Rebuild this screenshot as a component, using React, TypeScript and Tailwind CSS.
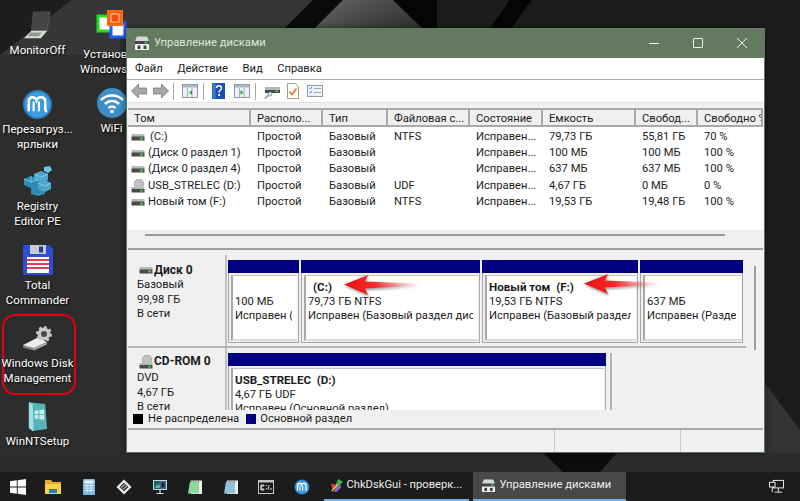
import type { ReactNode } from "react";

// Small hard drive glyph used in the list, disk labels
function DriveIcon({ className = "" }: { className?: string }) {
  return (
    <svg viewBox="0 0 14 8" className={className}>
      <rect x="0.5" y="1" width="13" height="3" rx="1" fill="#b8b8b8" />
      <rect x="0.5" y="3.5" width="13" height="4" fill="#4a4a4a" />
      <rect x="9" y="4.5" width="3" height="2" fill="#46c85a" />
    </svg>
  );
}

function CdIcon({ className = "" }: { className?: string }) {
  return (
    <svg viewBox="0 0 14 14" className={className}>
      <circle cx="8" cy="5" r="4.8" fill="#c4c4c4" stroke="#888" strokeWidth="0.6" />
      <circle cx="8" cy="5" r="1.4" fill="#f4f4f4" stroke="#777" strokeWidth="0.5" />
      <rect x="0.5" y="8" width="13" height="2" fill="#b8b8b8" />
      <rect x="0.5" y="10" width="13" height="3.5" fill="#4a4a4a" />
      <rect x="9" y="11" width="3" height="1.5" fill="#46c85a" />
    </svg>
  );
}

function ManagerIcon({ className = "" }: { className?: string }) {
  return (
    <svg viewBox="0 0 16 16" className={className}>
      <path d="M3 1.5h10l2 4.5H1z" fill="#d8d8d8" />
      <rect x="1" y="6" width="14" height="3" fill="#444" />
      <rect x="10.5" y="6.8" width="3" height="1.4" fill="#4bd463" />
      <rect x="1" y="9" width="14" height="6" rx="1" fill="#f2f2f2" />
      <rect x="3.5" y="10.5" width="3" height="3.5" fill="#444" />
      <rect x="9.5" y="10.5" width="3" height="3.5" fill="#444" />
    </svg>
  );
}

function MoboIcon({ className = "" }: { className?: string }) {
  return (
    <svg viewBox="0 0 32 32" className={className}>
      <circle cx="16" cy="16" r="15" fill="#2a7fc4" />
      <circle cx="16" cy="16" r="13" fill="#3f9bdc" />
      <path
        d="M7 23V13c0-3 1.5-4.500 4-4.500s3.500 1.500 4 3c.5-1.500 2-3 4.500-3S24 10 24 13v7c0 2 1 3 2 3"
        fill="none"
        stroke="#fff"
        strokeWidth="2.6"
      />
      <path d="M12 23V13M17.500 23V13" fill="none" stroke="#fff" strokeWidth="2.2" />
    </svg>
  );
}

function NoteIcon({ tone }: { tone: "green" | "blue" }) {
  const fill = tone === "green" ? "#8fd9a0" : "#8fc3d9";
  return (
    <svg viewBox="0 0 16 16" className="h-[16px] w-[16px]">
      <rect x="4" y="1.500" width="11" height="13.500" fill="#f1efe2" />
      <path d="M3 2.500h9v12H1z" fill={fill} />
      <path d="M4 1.500v2M6.500 1.500v2M9 1.500v2M11.500 1.500v2" stroke="#667" strokeWidth="0.7" />
    </svg>
  );
}

const taskbarIcons: ReactNode[] = [
  <svg key="win" viewBox="0 0 16 16" className="h-[16px] w-[16px]">
    <path d="M0 2.300l6.800-1v6.300H0zM7.700 1.200L16 0v7.600H7.700zM0 8.400h6.800v6.300L0 13.700zM7.700 8.400H16V16l-8.300-1.200z" fill="#fff" />
  </svg>,
  <svg key="folder" viewBox="0 0 16 16" className="h-[16px] w-[16px]">
    <path d="M0 1h6l1.500 2H16v12H0z" fill="#e9a92c" />
    <path d="M0 5h16v10H0z" fill="#fbd14b" />
    <rect x="4" y="10" width="8" height="4" fill="#1f7ccf" />
  </svg>,
  <svg key="calc" viewBox="0 0 12 16" className="h-[16px] w-[12px]">
    <rect width="12" height="16" rx="1" fill="#7fb9e0" />
    <rect x="1.500" y="1.500" width="9" height="3" fill="#e8f3fa" />
    <path d="M1.500 6.500h9M1.500 9h9M1.500 11.500h9M4 5.500v8M8 5.500v8" stroke="#dcecf6" strokeWidth="1" />
  </svg>,
  <svg key="chip" viewBox="0 0 16 16" className="h-[16px] w-[16px]">
    <path d="M8 0.500l7.500 7.500L8 15.500.5 8z" fill="#ececec" />
    <path d="M8 3.500L12.500 8 8 12.500 3.500 8z" fill="#3a3a3a" />
    <path d="M5 8.500l5-4M6.500 10.500l5-4" stroke="#e4e4e4" strokeWidth="0.9" />
  </svg>,
  <svg key="monitor" viewBox="0 0 16 16" className="h-[16px] w-[16px]">
    <rect x="1" y="1" width="14" height="10" fill="#bcd8e8" />
    <rect x="2" y="2" width="12" height="8" fill="#28566e" />
    <path d="M3 9l2-4 2 2 1-3v5z" fill="#58c27a" />
    <rect x="9" y="3" width="4" height="6" fill="#222" stroke="#9ac" strokeWidth="0.5" />
    <path d="M8 11v3M4.500 14.500h7" stroke="#ddd" strokeWidth="1.200" />
  </svg>,
  <NoteIcon key="note-green" tone="green" />,
  <NoteIcon key="note-blue" tone="blue" />,
  <svg key="cmd" viewBox="0 0 16 14" className="h-[14px] w-[16px]">
    <rect width="16" height="14" fill="#c4c4c4" />
    <rect x="1" y="2.500" width="14" height="10.500" fill="#1b1b1b" />
    <path d="M3 5h3v1H3v3h3v1H3zM8 5.500h1M8 8.500h1M11 5l-1 5M12 9h2" stroke="#eee" strokeWidth="0.9" fill="none" />
  </svg>,
  <MoboIcon key="mobo" className="h-[16px] w-[16px]" />,
];

const columns = ["Том", "Располо...", "Тип", "Файловая с...", "Состояние", "Емкость", "Свобод...", "Свободно %"];

const rows = [
  { name: "(C:)", fs: "NTFS", size: "79,73 ГБ", free: "55,81 ГБ", pct: "70 %", gap: "ml-[5px]", cd: false },
  { name: "(Диск 0 раздел 1)", fs: "", size: "100 МБ", free: "100 МБ", pct: "100 %", gap: "ml-[3px]", cd: false },
  { name: "(Диск 0 раздел 4)", fs: "", size: "637 МБ", free: "637 МБ", pct: "100 %", gap: "ml-[3px]", cd: false },
  { name: "USB_STRELEC (D:)", fs: "UDF", size: "4,67 ГБ", free: "0 МБ", pct: "0 %", gap: "ml-[3px]", cd: true },
  { name: "Новый том (F:)", fs: "NTFS", size: "19,53 ГБ", free: "19,48 ГБ", pct: "100 %", gap: "ml-[3px]", cd: false },
];

function Partition({
  width,
  title,
  titleIndent = "",
  size,
  status,
}: {
  width: string;
  title?: string;
  titleIndent?: string;
  size: string;
  status: string;
}) {
  return (
    <div className={`${width} h-[83px] shrink-0 border border-t-0 border-[#a8a8a8] bg-[#f0f0f0]`}>
      <div className="-mx-px h-[13px] bg-[#000080]" />
      <div className="ml-[2px] mr-[1px] mt-[2px] h-[66px] overflow-hidden whitespace-nowrap border-l-2 border-t border-b-2 border-l-[#a8a8a8] border-t-[#c4c4c4] border-b-[#dcdcdc] bg-white pl-[2px] pt-[4px] leading-[14.5px]">
        <div className={`h-[14.5px] whitespace-pre text-[11.6px] font-bold ${titleIndent}`}>{title}</div>
        <div>{size}</div>
        <div className="mr-[5px] overflow-hidden">{status}</div>
      </div>
    </div>
  );
}

function DesktopIcon({ className, icon, label }: { className: string; icon: ReactNode; label: string[] }) {
  return (
    <div className={`absolute left-0 flex w-[75px] flex-col items-center text-[11.5px] leading-[14.5px] text-white [text-shadow:1px_1px_2px_#000] ${className}`}>
      <div className="flex h-[36px] items-center justify-center">{icon}</div>
      {label.map((line) => (
        <span key={line} className="whitespace-nowrap">
          {line}
        </span>
      ))}
    </div>
  );
}

function RedArrow({ className, id }: { className: string; id: string }) {
  return (
    <svg viewBox="0 0 76 22" className={`absolute h-[22px] w-[76px] drop-shadow-[1px_2px_1px_rgba(0,0,0,0.35)] ${className}`}>
      <defs>
        <linearGradient id={id} x1="0" x2="1" y1="0" y2="0">
          <stop offset="0" stopColor="#ee0f0f" />
          <stop offset="0.4" stopColor="#f52a2a" />
          <stop offset="1" stopColor="#ff8080" stopOpacity="0" />
        </linearGradient>
      </defs>
      <path d="M0 10.500L24 1l-3 6.500 55 2v2L21 14.500l3 6.500z" fill={`url(#${id})`} />
    </svg>
  );
}

export default function App() {
  return (
    <div className="relative h-[501px] w-[800px] overflow-hidden bg-[#2d2d2d] font-['Roboto',sans-serif] text-[11.2px] text-[#1c1c1c]">
      {/* wallpaper */}
      <svg viewBox="0 0 800 501" className="absolute inset-0 h-full w-full">
        <defs>
          <linearGradient id="shine" x1="0" x2="1" y1="0" y2="0.600">
            <stop offset="0" stopColor="#666" />
            <stop offset="1" stopColor="#333" />
          </linearGradient>
        </defs>
        <path d="M0 0h72L0 55z" fill="#1d1d1d" />
        <path d="M72 0h241l-30 30H120v25H0z" fill="#363636" />
        <path d="M313 0h30l-30 30h-30z" fill="#0a0a0a" />
        <path d="M343 0h50l31 30H313z" fill="url(#shine)" />
        <path d="M393 0h44l25 30h-38z" fill="#060606" />
        <path d="M437 0h363v472H437z" fill="#1c1c1c" />
        <path d="M510 0h22l-22 30h-21z" fill="#050505" />
        <path d="M765 383l35 47v42H660z" fill="#333" />
        <path d="M0 453h800v19H0z" fill="#2c2c2c" />
        <path d="M543 453h74l-17 19h-37z" fill="#0c0c0c" />
      </svg>

      {/* desktop icons */}
      <DesktopIcon
        className="top-[7px]"
        label={["MonitorOff"]}
        icon={
          <svg viewBox="0 0 32 32" className="h-[30px] w-[30px]">
            <path d="M11 2h18l-3 20H9z" fill="#454545" stroke="#5c5c5c" strokeWidth="0.6" />
            <path d="M9 22h17l-7 8H1z" fill="#d6dcd6" />
            <path d="M8 24h12l-3 4H5z" fill="#8c9a8c" />
          </svg>
        }
      />
      <DesktopIcon className="top-[86px]" label={["Перезагруз...", "ярлыки"]} icon={<MoboIcon className="h-[31px] w-[31px]" />} />
      <DesktopIcon
        className="top-[163px]"
        label={["Registry", "Editor PE"]}
        icon={
          <svg viewBox="0 0 32 32" className="h-[32px] w-[32px]">
            <path d="M2 14l7-3 7 3v6l-7 3-7-3zM9 23l7-3 7 3v6l-7 2-7-2z" fill="#2f8db5" />
            <path d="M12 9l7-3 7 3v6l-7 3-7-3zM16 18l7-3 6 3v6l-6 3-7-3z" fill="#4aa8cf" />
            <path d="M22 2l6-1 2 4-4 3-4-2z" fill="#6cc4e4" />
            <path d="M2 14l7 3 7-3M9 11v6M12 9l7 3 7-3M16 18l7 3 6-3" fill="none" stroke="#9adcf0" strokeWidth="0.7" />
          </svg>
        }
      />
      <DesktopIcon
        className="top-[242px]"
        label={["Total", "Commander"]}
        icon={
          <svg viewBox="0 0 32 32" className="h-[32px] w-[32px]">
            <path d="M1 1h26l4 4v26H1z" fill="#2b4fd0" />
            <rect x="8" y="1" width="16" height="9" fill="#c9c9d4" />
            <rect x="17" y="2.500" width="4" height="6" fill="#24408f" />
            <rect x="5" y="13" width="22" height="16" fill="#fff" />
            <path d="M5 16h22M5 20h22M5 24h22" stroke="#e8394d" strokeWidth="2" />
          </svg>
        }
      />
      <div className="absolute left-[2px] top-[314px] h-[81px] w-[74px] rounded-[13px] border-2 border-[#e4000f]" />
      <DesktopIcon
        className="top-[320px]"
        label={["Windows Disk", "Management"]}
        icon={
          <svg viewBox="0 0 32 26" className="h-[26px] w-[32px]">
            <circle cx="22" cy="9" r="6.500" fill="#c8c8c8" stroke="#c8c8c8" strokeWidth="3" strokeDasharray="2.500 2.500" />
            <circle cx="22" cy="9" r="3" fill="#4a4a4a" />
            <path d="M1 20l14-7 10 4-13 6H6z" fill="#ececec" />
            <path d="M1 20l11 3v2.500L1 22.500z" fill="#8a8a8a" />
            <path d="M12 23l13-6v2.500l-13 6z" fill="#a8a8a8" />
          </svg>
        }
      />
      <DesktopIcon
        className="top-[398px]"
        label={["WinNTSetup"]}
        icon={
          <svg viewBox="0 0 24 32" className="h-[31px] w-[23px]">
            <path d="M3 1l17 2 2 26-15 2-4-3z" fill="#56b3b8" />
            <path d="M3 1l4 2 1 28-1 0-4-3z" fill="#a5e0e0" />
            <path d="M9 10l4-.6v4H9zM14 9.300l5-.7v5h-5zM9 14.500h4v4l-4-.5zM14 14.500h5v5l-5-.6z" fill="#c5eeee" />
          </svg>
        }
      />

      {/* second-column icons, the window hides their right part */}
      <div className="absolute left-[74px] top-[7px] flex w-[75px] flex-col items-center text-[11.5px] leading-[14.5px] text-white [text-shadow:1px_1px_2px_#000]">
        <svg viewBox="0 0 32 30" className="mb-[8px] mt-[2px] h-[30px] w-[32px]">
          <rect x="2" y="7" width="14" height="15" fill="#fff" stroke="#1ee01e" strokeWidth="3" />
          <rect x="15" y="14" width="14" height="14" fill="#fff" stroke="#1e5cff" strokeWidth="3" />
          <rect x="12" y="2" width="14" height="14" fill="#ff5a0a" stroke="#ff6a10" strokeWidth="2" />
          <rect x="15" y="5" width="8" height="8" fill="#ff4a00" stroke="#ffd8c0" strokeWidth="1" />
        </svg>
        <span className="whitespace-nowrap">Установка</span>
        <span className="whitespace-nowrap">Windows 10</span>
      </div>
      <div className="absolute left-[74px] top-[88px] flex w-[75px] flex-col items-center text-[11.5px] leading-[14.5px] text-white [text-shadow:1px_1px_2px_#000]">
        <svg viewBox="0 0 30 30" className="mb-[3px] h-[30px] w-[30px]">
          <circle cx="15" cy="15" r="15" fill="#3b8fc6" />
          <path d="M4 12c6-6 16-6 22 0M8 16c4-4 10-4 14 0M11.500 20c2-2 5-2 7 0" fill="none" stroke="#fff" strokeWidth="2.600" />
          <circle cx="15" cy="23.500" r="1.800" fill="#fff" />
        </svg>
        <span>WiFi</span>
      </div>

      {/* disk management window */}
      <div className="absolute left-[126px] top-[28px] flex h-[425px] w-[639px] flex-col border-x border-b border-[#5f785e] bg-[#f0f0f0] shadow-[0_0_6px_rgba(0,0,0,0.5)]">
        <div className="flex h-[30px] shrink-0 items-center bg-[#637a61] pl-[7px] text-[#dfe6de]">
          <ManagerIcon className="h-[16px] w-[16px]" />
          <span className="ml-[4px]">Управление дисками</span>
          <div className="ml-auto flex">
            <div className="flex h-[30px] w-[44px] items-center justify-center">
              <div className="h-px w-[10px] bg-[#eef2ee]" />
            </div>
            <div className="flex h-[30px] w-[44px] items-center justify-center">
              <div className="h-[10px] w-[10px] rounded-[1px] border border-[#eef2ee]" />
            </div>
            <div className="flex h-[30px] w-[44px] items-center justify-center">
              <svg viewBox="0 0 10 10" className="h-[10px] w-[10px]">
                <path d="M0 0l10 10M10 0L0 10" stroke="#eef2ee" strokeWidth="1" />
              </svg>
            </div>
          </div>
        </div>

        <div className="flex h-[22px] shrink-0 items-center gap-[14.5px] border-b border-[#a9a9a9] bg-white pl-[8px] pt-px">
          <span>Файл</span>
          <span>Действие</span>
          <span>Вид</span>
          <span>Справка</span>
        </div>

        <div className="flex h-[22px] shrink-0 items-center bg-white pl-[4px]">
          <svg viewBox="0 0 38 16" className="h-[16px] w-[38px]">
            <path d="M0.500 8l7-7v4h8v6h-8v4z" fill="#a6a6a6" stroke="#7c7c7c" strokeWidth="0.8" />
            <path d="M37.500 8l-7-7v4h-8v6h8v4z" fill="#a6a6a6" stroke="#7c7c7c" strokeWidth="0.8" />
          </svg>
          <div className="ml-[4px] h-[17px] w-px bg-[#a9a9a9]" />
          <svg viewBox="0 0 16 14" className="ml-[8px] h-[14px] w-[16px]">
            <rect x="0.500" y="0.500" width="15" height="13" fill="#eef2f6" stroke="#8e9aa4" />
            <rect x="1" y="1" width="14" height="2.500" fill="#a9b9c6" />
            <path d="M5.500 4v9M10 4v9" stroke="#8e9aa4" strokeWidth="0.800" />
            <path d="M10 6v5L7 8.500z" fill="#2ea84a" />
          </svg>
          <div className="ml-[5px] h-[17px] w-px bg-[#a9a9a9]" />
          <svg viewBox="0 0 13 16" className="ml-[8px] h-[16px] w-[13px]">
            <rect width="13" height="16" fill="#1c4fb0" />
            <rect x="0.500" y="0.500" width="3" height="15" fill="#4579d6" />
            <path d="M4.500 5c0-3 5-3 5 0 0 2-2.500 2-2.500 4.500" fill="none" stroke="#fff" strokeWidth="1.500" />
            <rect x="6.200" y="11" width="1.800" height="2" fill="#fff" />
          </svg>
          <svg viewBox="0 0 16 14" className="ml-[9px] h-[14px] w-[16px]">
            <rect x="0.500" y="0.500" width="15" height="13" fill="#eef2f6" stroke="#8e9aa4" />
            <rect x="1" y="1" width="14" height="2.500" fill="#a9b9c6" />
            <path d="M5.500 4v9M10 4v9" stroke="#8e9aa4" strokeWidth="0.800" />
            <path d="M6.500 6v5l3-2.500z" fill="#2ea84a" />
          </svg>
          <div className="ml-[5px] h-[17px] w-px bg-[#a9a9a9]" />
          <svg viewBox="0 0 16 16" className="ml-[8px] h-[16px] w-[16px]">
            <rect x="1" y="4" width="15" height="3" fill="#b8b8b8" />
            <rect x="1" y="7" width="15" height="3" fill="#474747" />
            <rect x="11" y="7.500" width="3" height="1.500" fill="#47c85c" />
            <circle cx="6" cy="11" r="2" fill="#dceaf2" stroke="#6f8a9c" strokeWidth="0.800" />
            <path d="M4.500 12.500L1 15.500" stroke="#6f8a9c" strokeWidth="1.300" />
          </svg>
          <svg viewBox="0 0 12 16" className="ml-[7px] h-[16px] w-[12px]">
            <path d="M0.500 0.500h8l3 3v12H0.500z" fill="#fff" stroke="#b09a7c" />
            <path d="M2.500 8.500l2.500 3 4.500-6" fill="none" stroke="#ea6a1f" strokeWidth="1.500" />
          </svg>
          <svg viewBox="0 0 16 12" className="ml-[8px] h-[12px] w-[16px]">
            <rect x="0.500" y="0.500" width="15" height="11" fill="#eef3f7" stroke="#8e9aa4" />
            <path d="M2.500 3l1 1 1.500-2M2.500 7l1 1 1.500-2" fill="none" stroke="#2f7bd6" strokeWidth="0.900" />
            <path d="M7 3.500h7M7 7.500h7" stroke="#9aa6b0" />
          </svg>
        </div>

        <div className="h-[6px] shrink-0 border-t border-[#e4e4e4]" />

        {/* volume list */}
        <div className="mx-px h-[122px] shrink-0 overflow-hidden bg-white">
          <div className="grid h-[19px] grid-cols-[123px_72px_65px_82px_73px_93px_62px_65px] bg-[#f0f0f0]">
            {columns.map((col) => (
              <div key={col} className="overflow-hidden whitespace-nowrap border-y-2 border-r-2 border-[#a9a9a9] pl-[6px] pt-px leading-[15px]">
                {col}
              </div>
            ))}
          </div>
          <div className="pt-[2px]">
            {rows.map((row) => (
              <div key={row.name} className="grid h-[16.2px] grid-cols-[123px_72px_65px_82px_73px_93px_62px_65px] items-center leading-[16px]">
                <div className="flex items-center whitespace-nowrap pl-[3px]">
                  {row.cd ? <CdIcon className="h-[14px] w-[14px] shrink-0" /> : <DriveIcon className="h-[8px] w-[14px] shrink-0" />}
                  <span className={row.gap}>{row.name}</span>
                </div>
                <div className="pl-[6px]">Простой</div>
                <div className="pl-[6px]">Базовый</div>
                <div className="pl-[6px]">{row.fs}</div>
                <div className="whitespace-nowrap pl-[6px]">Исправен...</div>
                <div className="pl-[6px]">{row.size}</div>
                <div className="pl-[6px]">{row.free}</div>
                <div className="pl-[6px]">{row.pct}</div>
              </div>
            ))}
          </div>
        </div>

        {/* list scrollbar + splitter */}
        <div className="mx-px h-[18px] shrink-0 pl-[17px] pt-[4px]">
          <div className="h-[2px] w-[580px] bg-[#9a9a9a]" />
        </div>
        <div className="mx-px h-[2px] shrink-0 bg-[#a0a0a0]" />

        {/* graphical disk view */}
        <div className="mx-px flex h-[160px] shrink-0 overflow-hidden">
          <div className="flex w-[618px] shrink-0 flex-col">
            <div className="flex h-[98px] shrink-0 border-b-2 border-[#b4b4b4] pt-[10px]">
              <div className="-mt-[5px] w-[99px] shrink-0 border-r-2 border-[#c0c0c0] pl-[9px] pt-[7px] leading-[14.5px]">
                <div className="flex h-[16px] items-center gap-[1px] pl-[2px] text-[12px] font-bold">
                  <DriveIcon className="h-[8px] w-[14px]" />
                  <span>Диск 0</span>
                </div>
                <div>Базовый</div>
                <div>99,98 ГБ</div>
                <div>В сети</div>
              </div>
              <div className="ml-px flex gap-[2px]">
                <Partition width="w-[71px]" size="100 МБ" status="Исправен (" />
                <Partition width="w-[179px]" title="(C:)" titleIndent="pl-[5px]" size="79,73 ГБ NTFS" status="Исправен (Базовый раздел диска)" />
                <Partition width="w-[156px]" title="Новый том  (F:)" size="19,53 ГБ NTFS" status="Исправен (Базовый раздел диска)" />
                <Partition width="w-[103px]" size="637 МБ" status="Исправен (Раздел)" />
              </div>
            </div>
            <div className="flex h-[62px] shrink-0 pt-[5px]">
              <div className="-mt-[5px] w-[99px] shrink-0 border-r-2 border-[#c0c0c0] pl-[9px] pt-[5px] leading-[14.5px]">
                <div className="mb-[1px] flex h-[17px] items-center gap-[1px] pl-[2px] text-[12px] font-bold">
                  <CdIcon className="h-[14px] w-[14px]" />
                  <span>CD-ROM 0</span>
                </div>
                <div>DVD</div>
                <div>4,67 ГБ</div>
                <div>В сети</div>
              </div>
              <div className="ml-px flex">
                <Partition width="w-[378px]" title="USB_STRELEC  (D:)" size="4,67 ГБ UDF" status="Исправен (Основной раздел)" />
                <div className="ml-[4px] h-[60px] w-[2px] bg-[#b4b4b4]" />
              </div>
            </div>
          </div>
          <div className="flex-1 pl-[8px] pt-[16px]">
            <div className="h-[84px] w-[2px] bg-[#a0a0a0]" />
          </div>
        </div>

        {/* legend */}
        <div className="mx-px flex h-[18px] shrink-0 items-center bg-[#f0f0f0] pl-[5px]">
          <div className="h-[10px] w-[10px] bg-black" />
          <span className="ml-[5px]">Не распределена</span>
          <div className="ml-[7px] h-[10px] w-[10px] bg-[#000080]" />
          <span className="ml-[4px]">Основной раздел</span>
        </div>
        <div className="mx-px h-[2px] shrink-0 bg-[#a9a9a9]" />

        {/* status bar */}
        <div className="grid flex-1 grid-cols-[428px_126px_1fr]">
          <div className="border-r border-[#c8c8c8]" />
          <div className="border-r border-[#c8c8c8]" />
          <div />
        </div>
      </div>

      <RedArrow id="arrow-c" className="left-[344px] top-[274px]" />
      <RedArrow id="arrow-f" className="left-[584px] top-[273px]" />

      {/* taskbar */}
      <div className="absolute bottom-0 left-0 flex h-[29px] w-[800px] items-stretch bg-[#1c1c1c] text-[#ededed]">
        {taskbarIcons.map((icon, i) => (
          <div key={i} className="flex w-[35.500px] shrink-0 items-center justify-center">
            {icon}
          </div>
        ))}
        <div className="ml-[4px] flex w-[145px] shrink-0 items-center overflow-hidden border-b-2 border-[#6fb1e6] pl-[5px]">
          <svg viewBox="0 0 16 16" className="h-[15px] w-[15px] shrink-0">
            <path d="M10 1l5 3-5 5-3-2z" fill="#38b54a" />
            <path d="M2 6l5 1 2 3-5 3z" fill="#e23a3a" />
            <path d="M8 9l4-2 1 3-5 5-3 0z" fill="#8a63d2" />
            <path d="M3 14l6-7" stroke="#e9c94a" strokeWidth="1.500" />
          </svg>
          <span className="ml-[3px] whitespace-nowrap">ChkDskGui - проверк...</span>
        </div>
        <div className="ml-[4px] flex w-[153px] shrink-0 items-center border-b-2 border-[#6fb1e6] bg-[#484848] pl-[8px]">
          <ManagerIcon className="h-[15px] w-[15px] shrink-0" />
          <span className="ml-[4px] whitespace-nowrap">Управление дисками</span>
        </div>
        <div className="ml-auto flex w-[36px] items-center justify-start pl-[5px]">
          <svg viewBox="0 0 16 16" className="h-[15px] w-[15px]">
            <rect x="4.500" y="1.500" width="11" height="8" fill="none" stroke="#eee" />
            <rect x="0.500" y="3.500" width="6" height="5" fill="#1c1c1c" stroke="#eee" />
            <path d="M10 9.500v4M6 14h8M3.500 8.500V14" stroke="#eee" />
          </svg>
        </div>
      </div>
    </div>
  );
}
